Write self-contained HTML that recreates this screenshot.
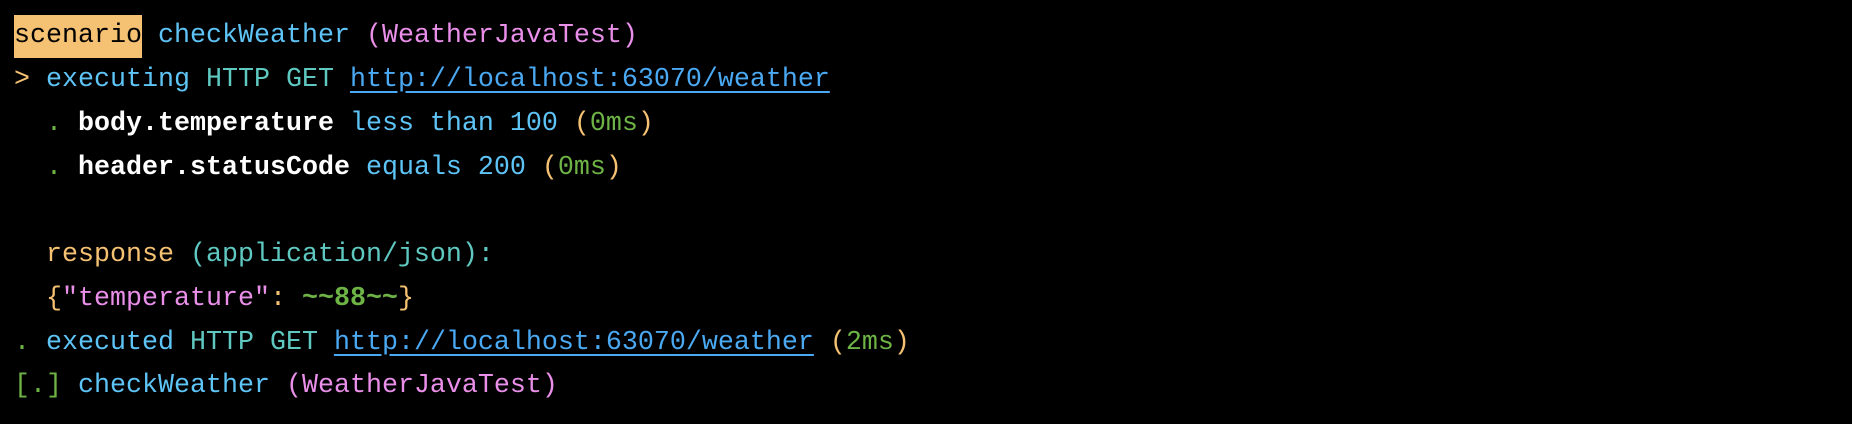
<!DOCTYPE html>
<html><head><meta charset="utf-8"><style>
html,body{margin:0;padding:0;background:#000;width:1852px;height:424px;overflow:hidden}
pre{margin:0;position:absolute;left:14px;top:-28.5px;font-family:"Liberation Mono",monospace;font-size:26.67px;line-height:43.75px;color:#5ec4f6}
.o{color:#f5c172}.b{color:#5ec4f6}.t{color:#5fc9c1}.p{color:#ea8fe9}.g{color:#6db345}.w{color:#fff;font-weight:bold}
.u{color:#4aa9f2;text-decoration:underline;text-underline-offset:5px}
.hl{background:#f5c172;color:#000;display:inline-block;height:43px;vertical-align:top}
</style></head><body><pre> 
<span class="hl">scenario</span> <span class="b">checkWeather</span> <span class="p">(WeatherJavaTest)</span>
<span class="o">&gt;</span> <span class="b">executing</span> <span class="t">HTTP GET</span> <span class="u">http://localhost:63070/weather</span>
  <span class="g">.</span> <span class="w">body.temperature</span> <span class="b">less than 100</span> <span class="o">(</span><span class="g">0ms</span><span class="o">)</span>
  <span class="g">.</span> <span class="w">header.statusCode</span> <span class="b">equals 200</span> <span class="o">(</span><span class="g">0ms</span><span class="o">)</span>

  <span class="o">response</span> <span class="t">(application/json):</span>
  <span class="o">{</span><span class="p">"temperature"</span><span class="o">:</span> <span class="g" style="font-weight:bold">~~88~~</span><span class="o">}</span>
<span class="g">.</span> <span class="b">executed</span> <span class="t">HTTP GET</span> <span class="u">http://localhost:63070/weather</span> <span class="o">(</span><span class="g">2ms</span><span class="o">)</span>
<span class="g">[.]</span> <span class="b">checkWeather</span> <span class="p">(WeatherJavaTest)</span></pre></body></html>
